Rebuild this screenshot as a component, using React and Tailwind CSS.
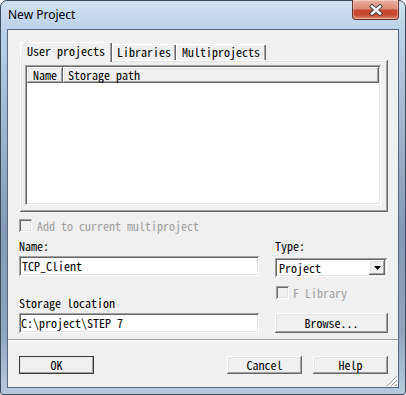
import React from 'react';

const raised =
  'shadow-[inset_-1px_-1px_#696969,inset_1px_1px_#ffffff,inset_-2px_-2px_#a0a0a0,inset_2px_2px_#e3e3e3]';
const sunken =
  'shadow-[inset_1px_1px_#a0a0a0,inset_-1px_-1px_#ffffff,inset_2px_2px_#696969,inset_-2px_-2px_#e3e3e3]';
const mono = "font-['Noto_Sans_Mono_CJK_SC','Liberation_Mono',monospace] text-[12px]";

const Tab = ({ label, selected, w }) =>
  selected ? (
    <div
      className={`relative z-10 -mb-[2px] h-[20px] ${w} bg-[#f0f0f0] pt-[2px] text-center leading-[14px] shadow-[inset_1px_1px_#ffffff,inset_-1px_0_#696969,inset_-2px_0_#a0a0a0]`}
    >
      {label}
    </div>
  ) : (
    <div
      className={`h-[16px] ${w} bg-[#f0f0f0] pt-[1px] text-center leading-[14px] shadow-[inset_1px_1px_#ffffff,inset_-1px_0_#696969,inset_-2px_0_#a0a0a0]`}
    >
      {label}
    </div>
  );

const Check = () => <div className={`h-[13px] w-[13px] shrink-0 bg-[#f0f0f0] ${sunken}`} />;

const Button = ({ children, isDefault, w = 'w-[75px]', h = 'h-[18px]' }) => (
  <div
    className={`${w} ${h} flex items-center justify-center bg-[#f0f0f0] ${raised} ${
      isDefault ? 'outline outline-1 outline-[#3c3c3c] -outline-offset-1' : ''
    }`}
  >
    {children}
  </div>
);

export default function App() {
  return (
    <div className="h-[395px] w-[406px] bg-white">
      <div className="flex h-[395px] w-[406px] flex-col rounded-t-[7px] rounded-b-[3px] border border-[#3e4b5b] bg-[linear-gradient(to_bottom,#d0e1f3_0px,#bcd2eb_28px,#a3bad5_110px,#8399b5_230px,#8ea5c0_330px,#b8cbe1_395px)]">
        {/* title bar */}
        <div className="flex h-[28px] items-start">
          <span className="ml-[7px] mt-[6px] font-['Noto_Sans',sans-serif] text-[12px] leading-[16px] text-black">
            New Project
          </span>
          <div className="-mt-px ml-auto mr-[6px] flex h-[20px] w-[47px] items-center justify-center rounded-b-[4px] border border-t-0 border-[#6b3026] bg-[linear-gradient(to_bottom,#eab2a4_0%,#dc8a76_45%,#c8472e_55%,#c74a30_78%,#dd8b70_100%)] shadow-[inset_0_0_0_1px_rgba(255,255,255,0.35)]">
            <svg width="14" height="12" viewBox="0 0 14 12">
              <path d="M3 2.5 L11 9.5 M11 2.5 L3 9.5" stroke="#3a3a3a" strokeWidth="4.2" strokeLinecap="square" />
              <path d="M3 2.5 L11 9.5 M11 2.5 L3 9.5" stroke="#ffffff" strokeWidth="2.4" strokeLinecap="square" />
            </svg>
          </div>
        </div>

        {/* client area */}
        <div className={`relative mx-[6px] flex h-[359px] flex-col border border-[#56687f] bg-[#f0f0f0] text-black ${mono}`}>
          {/* tabs */}
          <div className="ml-[12px] mt-[12px] flex h-[18px] items-end">
            <Tab label="User projects" selected w="w-[92px]" />
            <Tab label="Libraries" w="w-[64px]" />
            <Tab label="Multiprojects" w="w-[90px]" />
          </div>
          <div className={`ml-[12px] h-[152px] w-[368px] pl-[5px] pt-[5px] ${raised}`}>
            <div className={`h-[140px] w-[356px] bg-white p-[2px] ${sunken}`}>
              <div className="flex h-[16px] leading-[14px]">
                <div className={`flex w-[36px] items-center bg-[#f0f0f0] pl-[6px] ${raised}`}>Name</div>
                <div className={`flex flex-1 items-center bg-[#f0f0f0] pl-[5px] ${raised}`}>Storage path</div>
              </div>
            </div>
          </div>

          {/* add to multiproject */}
          <div className="ml-[11px] mt-[7px] flex h-[13px] items-center gap-[5px] leading-[13px] text-[#a0a0a0]">
            <Check />
            <span>Add to current multiproject</span>
          </div>

          {/* fields */}
          <div className="ml-[11px] mt-[7px] flex gap-[16px] leading-[14px]">
            <div className="flex w-[240px] flex-col">
              <div className="h-[14px]">Name:</div>
              <div className={`mt-[3px] flex h-[20px] items-center bg-white pl-[3px] ${sunken}`}>TCP_Client</div>
              <div className="mt-[20px] h-[14px]">Storage location</div>
              <div className={`mt-[3px] flex h-[20px] items-center bg-white pl-[2px] ${sunken}`}>C:\project\STEP 7</div>
            </div>
            <div className="flex w-[113px] flex-col">
              <div className="h-[14px]">Type:</div>
              <div className={`mt-[5px] flex h-[19px] w-[112px] items-center bg-white pl-[4px] pr-[2px] ${sunken}`}>
                <span className="flex-1">Project</span>
                <div className={`flex h-[15px] w-[16px] items-center justify-center bg-[#f0f0f0] ${raised}`}>
                  <svg width="7" height="4" viewBox="0 0 7 4">
                    <path d="M0 0 H7 L3.5 4 Z" fill="#000000" />
                  </svg>
                </div>
              </div>
              <div className="ml-[1px] mt-[9px] flex h-[13px] items-center gap-[4px] leading-[13px] text-[#a0a0a0]">
                <Check />
                <span>F Library</span>
              </div>
              <div className="mt-[14px]">
                <Button w="w-[113px]" h="h-[20px]">Browse...</Button>
              </div>
            </div>
          </div>

          {/* separator */}
          <div className="mt-[6px] h-[2px] border-t border-b border-t-[#a0a0a0] border-b-white" />

          {/* buttons */}
          <div className="mt-[15px] flex pl-[11px] pr-[10px]">
            <Button isDefault>OK</Button>
            <div className="ml-auto flex gap-[11px]">
              <Button>Cancel</Button>
              <Button>Help</Button>
            </div>
          </div>

          {/* size grip */}
          <svg className="absolute bottom-0 right-0" width="12" height="12" viewBox="0 0 12 12">
            <path d="M11 1 L1 11 M11 5 L5 11 M11 9 L9 11" stroke="#a0a0a0" strokeWidth="1" />
            <path d="M12 2 L2 12 M12 6 L6 12" stroke="#ffffff" strokeWidth="1" />
          </svg>
        </div>
      </div>
    </div>
  );
}
